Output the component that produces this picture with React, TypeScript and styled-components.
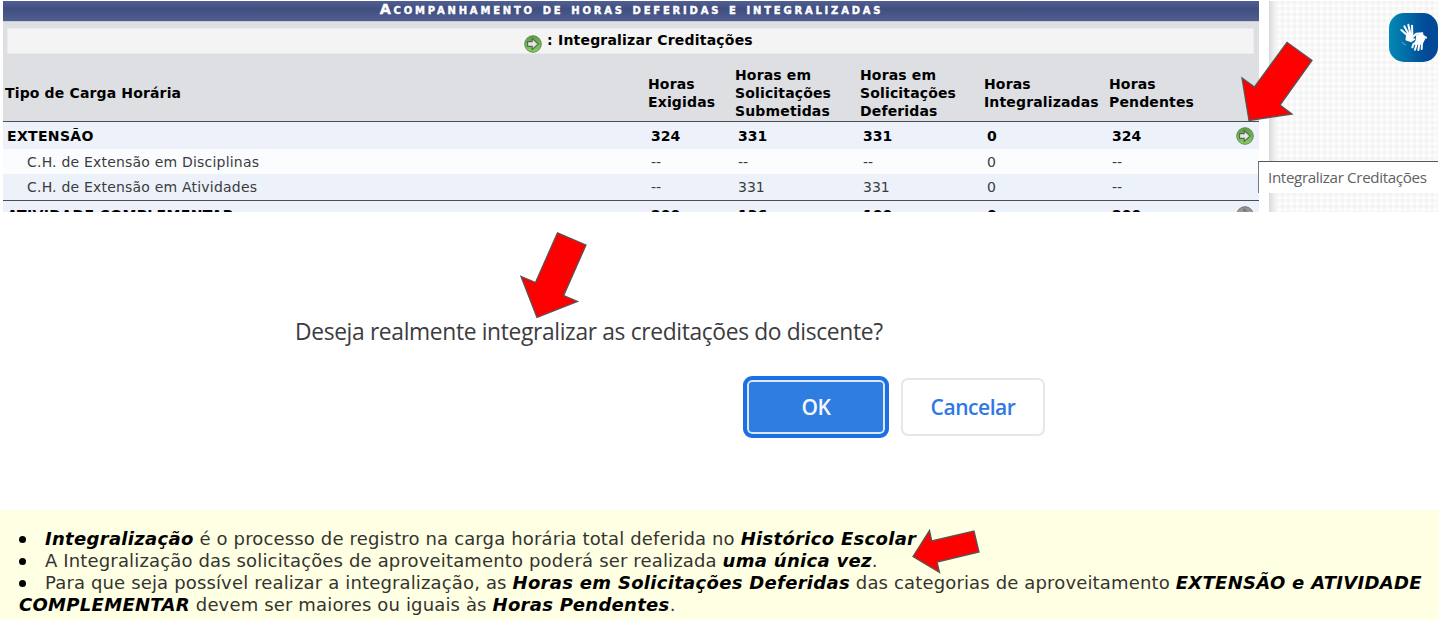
import React from "react";
import styled, { createGlobalStyle } from "styled-components";

const Global = createGlobalStyle`
  * { box-sizing: border-box; }
  body { margin: 0; background: #fff; overflow: hidden; }
`;

const verdana = `Verdana, "DejaVu Sans", sans-serif`;
const segoe = `"Segoe UI", "Open Sans", "Noto Sans", sans-serif`;

const Page = styled.main`
  position: relative;
  width: 1439px;
  height: 620px;
  display: flex;
  flex-direction: column;
  background: #fff;
`;

const TopPanel = styled.section`
  height: 212px;
  padding: 1px 1px 0 3px;
  display: flex;
  overflow: hidden;
`;

const Report = styled.div`
  width: 1256px;
  height: 211px;
  overflow: hidden;
  display: flex;
  flex-direction: column;
  flex: none;
  background: #dedfe3;
  font-family: ${verdana};
`;

const Caption = styled.h1`
  margin: 0;
  height: 21px;
  flex: none;
  padding-left: 1px;
  border-bottom: 1px solid #c5cad8;
  background: linear-gradient(#525f92 0, #404e80 40%, #505e90 100%);
  color: #fff;
  text-align: center;
  font-size: 14.4px;
  line-height: 17px;
  font-weight: 700;
  font-variant: small-caps;
  letter-spacing: 2.8px;
  -webkit-text-stroke: 0.4px #fff;
`;

const Legend = styled.div`
  margin: 6px 5px 0 4px;
  height: 26px;
  flex: none;
  display: flex;
  justify-content: center;
  gap: 5px;
  padding-left: 16px;
  background: #f4f4f4;
  border: 1px solid #ebebed;
  font-weight: 700;
  font-size: 14px;
  letter-spacing: 0.2px;
  line-height: 22px;
  svg { margin-top: 6px; }
`;

const columns = "645px 87px 125px 124px 125px 1fr";

const HeadRow = styled.div`
  height: 67px;
  flex: none;
  display: grid;
  grid-template-columns: ${columns};
  align-items: center;
  padding-top: 10px;
  font-weight: 700;
  font-size: 14px;
  letter-spacing: 0.15px;
  line-height: 18px;
  color: #000;
`;

const HeadCell = styled.div<{ $first?: boolean }>`
  padding-left: ${(p) => (p.$first ? 2 : 0)}px;
  white-space: nowrap;
`;

const Row = styled.div<{ $group?: boolean; $light?: boolean; $h: number }>`
  height: ${(p) => p.$h}px;
  flex: none;
  display: grid;
  grid-template-columns: ${columns};
  align-items: center;
  position: relative;
  background: ${(p) => (p.$light ? "#fafcfe" : "#edf1f9")};
  border-top: ${(p) => (p.$group ? "1px solid #4c4e52" : "0")};
  font-size: 14px;
  letter-spacing: ${(p) => (p.$group ? 0.35 : 0.2)}px;
  line-height: 24px;
  font-weight: ${(p) => (p.$group ? 700 : 400)};
  color: ${(p) => (p.$group ? "#000" : "#3a3c40")};
`;

const Name = styled.div<{ $sub?: boolean }>`
  padding-left: ${(p) => (p.$sub ? 24 : 4)}px;
`;

const Value = styled.div`
  padding-left: 3px;
  letter-spacing: 0;
`;

const LastValue = styled(Value)`
  display: flex;
  align-items: center;
  justify-content: space-between;
  padding-right: 5px;
`;

const Backdrop = styled.aside`
  flex: 1;
  margin-left: 10px;
  background:
    linear-gradient(90deg, #d9d9d9 0, #f1f1f1 6px, transparent 9px),
    repeating-linear-gradient(90deg, rgba(0, 0, 0, 0.02) 0 3px, transparent 3px 6px),
    repeating-linear-gradient(rgba(0, 0, 0, 0.02) 0 3px, transparent 3px 6px),
    #fdfdfd;
`;

const SignButton = styled.button`
  position: absolute;
  left: 1389px;
  top: 13px;
  width: 49px;
  height: 49px;
  padding: 0;
  border: 0;
  border-radius: 15px;
  background: linear-gradient(90deg, #0389b5, #024a98 75%);
  svg { display: block; }
`;

const Tooltip = styled.div`
  position: absolute;
  left: 1258px;
  top: 161px;
  width: 180px;
  height: 32px;
  padding-left: 9px;
  background: #fff;
  border-top: 1px solid #55565a;
  border-left: 1px solid #77787c;
  color: #626262;
  font: 15.2px/30px ${segoe};
  letter-spacing: -0.36px;
  white-space: nowrap;
`;

const Dialog = styled.section`
  height: 298px;
  flex: none;
  padding: 101px 394px 0 295px;
  font-family: ${segoe};
`;

const Question = styled.p`
  margin: 0;
  height: 63px;
  font-size: 22.8px;
  letter-spacing: -0.35px;
  line-height: 38px;
  color: #3c3c40;
  white-space: nowrap;
`;

const Actions = styled.div`
  display: flex;
  justify-content: flex-end;
  align-items: center;
  gap: 12px;
`;

const Button = styled.button<{ $primary?: boolean }>`
  width: ${(p) => (p.$primary ? 146 : 144)}px;
  height: ${(p) => (p.$primary ? 62 : 58)}px;
  padding: 0 0 1px;
  border-radius: ${(p) => (p.$primary ? 9 : 7)}px;
  border: ${(p) => (p.$primary ? "4px solid #1a70e6" : "2px solid #e6e7ea")};
  background: ${(p) => (p.$primary ? "#2f7de1" : "#fff")};
  box-shadow: ${(p) => (p.$primary ? "inset 0 0 0 2px #dbe7f8" : "none")};
  color: ${(p) => (p.$primary ? "#f4f8fe" : "#2f78e4")};
  font: 600 21px/50px ${segoe};
  letter-spacing: -0.45px;
`;

const Notes = styled.ul`
  margin: 0;
  flex: 1;
  padding: 18px 0 0 19px;
  list-style: none;
  background: #ffffe4;
  font-family: ${verdana};
  font-size: 18px;
  letter-spacing: 0.15px;
  line-height: 22px;
  color: #34342f;
  white-space: nowrap;
  em { font-weight: 700; color: #000; letter-spacing: 0.3px; }
`;

const Note = styled.li`
  &::before {
    content: "";
    display: inline-block;
    width: 7px;
    height: 7px;
    border-radius: 50%;
    background: #000;
    margin-right: 19px;
    vertical-align: 2px;
  }
`;

const Arrows = styled.svg`
  position: absolute;
  inset: 0;
  pointer-events: none;
`;

function GoIcon({ muted }: { muted?: boolean }) {
  const id = muted ? "go-muted" : "go";
  return (
    <svg width="18" height="18" viewBox="0 0 18 18">
      <defs>
        <linearGradient id={id} x1="0" y1="0" x2="0" y2="1">
          <stop offset="0" stopColor={muted ? "#8d8d8d" : "#5d9a48"} />
          <stop offset="1" stopColor={muted ? "#bbb" : "#85d05c"} />
        </linearGradient>
      </defs>
      <circle cx="9" cy="9" r="8.3" fill={`url(#${id})`} stroke={muted ? "#777" : "#5f8f55"} strokeWidth="1" />
      <path d="M3.6 6.6h4.6V3.6L14.2 9l-6 5.4V11.4H3.6z" fill="#e3e7e2" stroke={muted ? "#666" : "#55694f"} strokeWidth="1.1" />
    </svg>
  );
}

function SignIcon() {
  return (
    <svg width="49" height="49" viewBox="0 0 147 147" fill="none" stroke="#fff" strokeLinecap="round" strokeLinejoin="round">
      <g strokeWidth="6">
        <path d="M37 51 54 66M46 40l13 24M58 35l6 27M69 38l1 26" />
        <path d="M74 92 70 103M83 93l-5 17M91 93l-3 18M99 90l-1 18" />
        <path d="M71 72 82 62 100 61M98 66l13 8" />
      </g>
      <path d="M54 64 70 62 68 71 64 76 76 79 66 85 52 80z" fill="#fff" strokeWidth="5" />
      <path d="M84 68 100 64 106 78 99 92 76 93 82 84z" fill="#fff" strokeWidth="5" />
      <path d="M40 88q3 7 10 8" strokeWidth="2" opacity="0.6" />
    </svg>
  );
}

const heads: string[][] = [
  ["Horas", "Exigidas"],
  ["Horas em", "Solicitações", "Submetidas"],
  ["Horas em", "Solicitações", "Deferidas"],
  ["Horas", "Integralizadas"],
  ["Horas", "Pendentes"],
];

type Entry = { name: string; group?: boolean; light?: boolean; h: number; values: string[]; muted?: boolean };

const entries: Entry[] = [
  { name: "EXTENSÃO", group: true, h: 28, values: ["324", "331", "331", "0", "324"] },
  { name: "C.H. de Extensão em Disciplinas", light: true, h: 25, values: ["--", "--", "--", "0", "--"] },
  { name: "C.H. de Extensão em Atividades", h: 26, values: ["--", "331", "331", "0", "--"] },
  { name: "ATIVIDADE COMPLEMENTAR", group: true, h: 28, values: ["200", "136", "100", "0", "200"], muted: true },
];

export default function App() {
  return (
    <Page>
      <Global />
      <TopPanel>
        <Report>
          <Caption>Acompanhamento de horas deferidas e integralizadas</Caption>
          <Legend>
            <GoIcon />
            <span>: Integralizar Creditações</span>
          </Legend>
          <HeadRow>
            <HeadCell $first>Tipo de Carga Horária</HeadCell>
            {heads.map((lines) => (
              <HeadCell key={lines.join(" ")}>
                {lines.map((line) => (
                  <div key={line}>{line}</div>
                ))}
              </HeadCell>
            ))}
          </HeadRow>
          {entries.map((e) => (
            <Row key={e.name} $group={e.group} $light={e.light} $h={e.h}>
              <Name $sub={!e.group}>{e.name}</Name>
              {e.values.slice(0, 4).map((v, i) => (
                <Value key={i}>{v}</Value>
              ))}
              <LastValue>
                {e.values[4]}
                {e.group && <GoIcon muted={e.muted} />}
              </LastValue>
            </Row>
          ))}
        </Report>
        <Backdrop />
      </TopPanel>
      <Dialog>
        <Question>Deseja realmente integralizar as creditações do discente?</Question>
        <Actions>
          <Button $primary>OK</Button>
          <Button>Cancelar</Button>
        </Actions>
      </Dialog>
      <Notes>
        <Note><em>Integralização</em> é o processo de registro na carga horária total deferida no <em>Histórico Escolar</em></Note>
        <Note>A Integralização das solicitações de aproveitamento poderá ser realizada <em>uma única vez</em>.</Note>
        <Note>
          Para que seja possível realizar a integralização, as <em>Horas em Solicitações Deferidas</em> das categorias de aproveitamento <em>EXTENSÃO e ATIVIDADE<br />COMPLEMENTAR</em> devem ser maiores ou iguais às <em>Horas Pendentes</em>.
        </Note>
      </Notes>
      <SignButton aria-label="Libras"><SignIcon /></SignButton>
      <Tooltip>Integralizar Creditações</Tooltip>
      <Arrows width="1439" height="620" fill="#f00" stroke="#555" strokeWidth="1.3">
        <path d="M1249 120.5 1242 78 1254.5 87 1287 42.3 1312 60.5 1280 105 1292 114z" />
        <path d="M537 317.5 521 276.5 535.5 282.5 557.5 232.8 586 245 563.7 295.5 577.5 301.5z" />
        <path d="M913 556.5 929.5 530.5 931.7 541 974 531 979 552 937 562 939.5 572.3z" />
      </Arrows>
    </Page>
  );
}
